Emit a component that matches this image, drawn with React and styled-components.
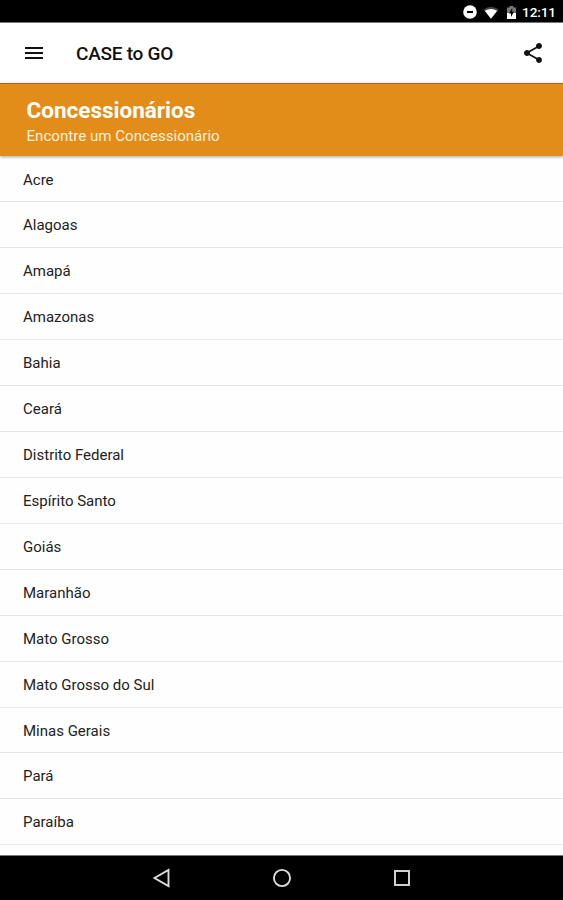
import React from "react";
import styled, { createGlobalStyle } from "styled-components";
import { MdMenu, MdShare } from "react-icons/md";

const GlobalStyle = createGlobalStyle`
  * {
    box-sizing: border-box;
  }

  body {
    margin: 0;
    background-color: #fff;
    font-family: Roboto, "Noto Sans", sans-serif;
  }
`;

const Screen = styled.div`
  display: flex;
  flex-direction: column;
  width: 563px;
  height: 900px;
  overflow: hidden;
  background-color: #fefefe;
`;

const StatusBar = styled.div`
  display: flex;
  flex: none;
  align-items: center;
  justify-content: flex-end;
  height: 23px;
  padding: 2px 7px 0 0;
  background-color: #000;
  border-bottom: 1px solid #777;
  color: #fff;

  svg {
    display: block;
  }

  .wifi {
    margin-left: 6px;
  }

  .battery {
    margin-left: 8px;
  }
`;

const Clock = styled.span`
  width: 34px;
  margin-left: 6px;
  font-size: 13.6px;
  font-weight: 500;
  letter-spacing: -0.1px;
  line-height: 20px;
  white-space: nowrap;
`;

const AppBar = styled.header`
  display: flex;
  flex: none;
  align-items: center;
  height: 60px;
  padding: 0 18px 0 22px;
  background-color: #fff;
  color: #111;

  svg {
    display: block;
    flex: none;
  }
`;

const AppTitle = styled.h1`
  flex: 1;
  margin: 2px 0 0 30px;
  font-size: 19px;
  font-weight: 500;
  letter-spacing: -0.25px;
  line-height: 24px;
`;

const Banner = styled.section`
  flex: none;
  height: 73px;
  padding: 13px 26.5px 0;
  background-color: #e28c19;
  border-top: 1px solid #a9670f;
  box-shadow: 0 1px 3px rgba(0, 0, 0, 0.35);
  color: #fff;
  z-index: 1;

  h2 {
    margin: 0;
    font-size: 22.5px;
    font-weight: 700;
    line-height: 26px;
  }

  p {
    margin: 3px 0 0;
    font-size: 15.1px;
    line-height: 20px;
    color: #fff1d8;
  }
`;

const StateList = styled.ul`
  flex: 1;
  min-height: 0;
  margin: 0;
  padding: 0.5px 0 0;
  list-style: none;
  overflow: hidden;
`;

const StateItem = styled.li`
  height: 45.93px;
  padding-left: 23px;
  border-bottom: 1px solid #e6e6e6;
  font-size: 15px;
  line-height: 47px;
  color: #222;
`;

const NavBar = styled.nav`
  display: flex;
  flex: none;
  align-items: center;
  justify-content: center;
  gap: 96px;
  height: 45px;
  background-color: #000;
  border-top: 1px solid #777;

  svg {
    display: block;
    fill: none;
    stroke: #dcdcdc;
    stroke-width: 1.9;
  }
`;

const states = [
  "Acre",
  "Alagoas",
  "Amapá",
  "Amazonas",
  "Bahia",
  "Ceará",
  "Distrito Federal",
  "Espírito Santo",
  "Goiás",
  "Maranhão",
  "Mato Grosso",
  "Mato Grosso do Sul",
  "Minas Gerais",
  "Pará",
  "Paraíba",
];

const App = () => {
  return (
    <>
      <GlobalStyle />
      <Screen>
        <StatusBar>
          <svg width="14" height="14" viewBox="0 0 14 14">
            <circle cx="7" cy="7" r="6.8" fill="#fff" />
            <rect x="4" y="6" width="6" height="2" fill="#000" />
          </svg>
          <svg className="wifi" width="16" height="13" viewBox="0 0 16 13">
            <path d="M0.5 3.5Q8-2.2 15.5 3.5L8 12.7Z" fill="#444" />
            <path d="M1.8 4.7Q8 1.2 14.2 4.7L8 12.7Z" fill="#fff" />
          </svg>
          <svg className="battery" width="9" height="13" viewBox="0 0 9 13">
            <path d="M0 1.5H2.5V0H6.5V1.5H9V7H0Z" fill="#777" />
            <path d="M0 7H9V13H0Z" fill="#fff" />
            <path d="M5.2 2L2 7.5H4V11L7 5.8H5.2Z" fill="#000" />
          </svg>
          <Clock>12:11</Clock>
        </StatusBar>

        <AppBar>
          <MdMenu size={24} />
          <AppTitle>CASE to GO</AppTitle>
          <MdShare size={24} />
        </AppBar>

        <Banner>
          <h2>Concessionários</h2>
          <p>Encontre um Concessionário</p>
        </Banner>

        <StateList>
          {states.map((name) => (
            <StateItem key={name}>{name}</StateItem>
          ))}
        </StateList>

        <NavBar>
          <svg width="24" height="24" viewBox="0 0 24 24">
            <path d="M4.5 12L18.5 4V20Z" />
          </svg>
          <svg width="24" height="24" viewBox="0 0 24 24">
            <circle cx="12" cy="12" r="8.1" />
          </svg>
          <svg width="24" height="24" viewBox="0 0 24 24">
            <rect x="5" y="5" width="14" height="14" />
          </svg>
        </NavBar>
      </Screen>
    </>
  );
};

export default App;
